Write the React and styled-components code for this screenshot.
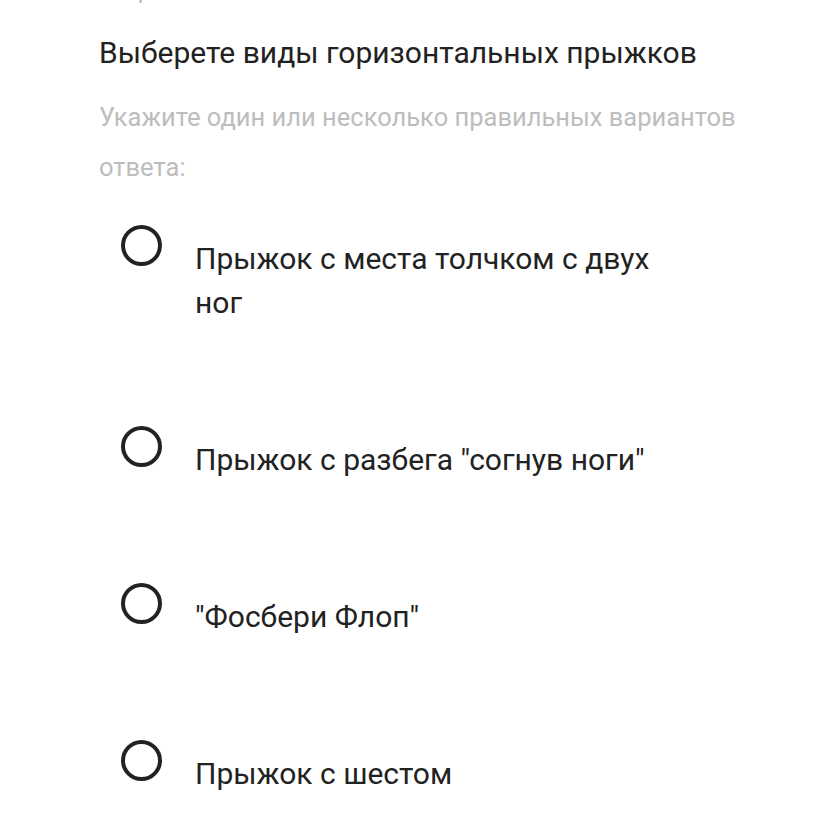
import styled, { createGlobalStyle } from 'styled-components';

const GlobalStyle = createGlobalStyle`
  body {
    margin: 0;
    background: #fff;
    font-family: Roboto, "Noto Sans", sans-serif;
    -webkit-font-smoothing: antialiased;
  }
`;

const Page = styled.div`
  width: 828px;
  height: 814px;
  overflow: hidden;
  padding-left: 99px;
  box-sizing: border-box;
`;

// bottom of the previous line, scrolled off the top of the screen
const Crumb = styled.div`
  margin-top: -24px;
  font-size: 22px;
  line-height: 30px;
  color: #b5b5b5;
`;

const Title = styled.h2`
  margin: 0;
  padding-top: 27px;
  font-size: 30px;
  line-height: 40px;
  font-weight: 400;
  color: #222;
`;

const Hint = styled.p`
  margin: 19px 0 0;
  width: 640px;
  font-size: 25.5px;
  line-height: 50px;
  color: #bdbdbd;
`;

const Options = styled.ul`
  list-style: none;
  margin: 33px 0 0;
  padding: 0 0 0 22px;
`;

const Option = styled.li`
  display: flex;
  align-items: flex-start;
  gap: 33px;
  padding-bottom: 101px;
`;

const Radio = styled.span`
  flex: none;
  width: 41px;
  height: 41px;
  box-sizing: border-box;
  border: 4px solid #222;
  border-radius: 50%;
`;

const Label = styled.span`
  margin-top: 12px;
  max-width: 480px;
  font-size: 30px;
  line-height: 44px;
  color: #222;
`;

const answers = [
  'Прыжок с места толчком с двух ног',
  'Прыжок с разбега "согнув ноги"',
  '"Фосбери Флоп"',
  'Прыжок с шестом',
];

const App = () => (
  <Page>
    <GlobalStyle />
    <Crumb>Вопрос 3 из 10</Crumb>
    <Title>Выберете виды горизонтальных прыжков</Title>
    <Hint>Укажите один или несколько правильных вариантов ответа:</Hint>
    <Options>
      {answers.map((text) => (
        <Option key={text}>
          <Radio />
          <Label>{text}</Label>
        </Option>
      ))}
    </Options>
  </Page>
);

export default App;
